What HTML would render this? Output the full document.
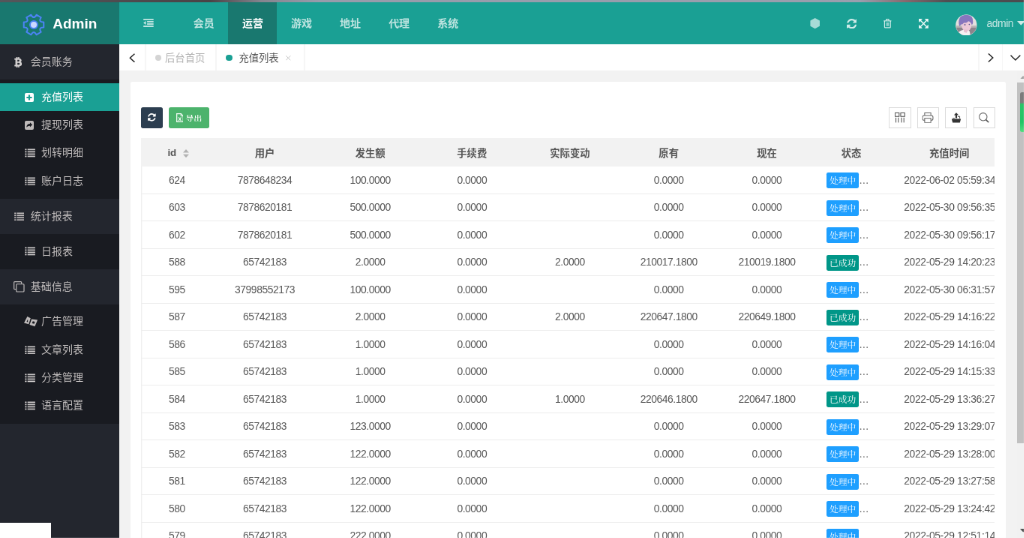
<!DOCTYPE html>
<html lang="zh-CN">
<head>
<meta charset="utf-8">
<title>Admin</title>
<style>
*{box-sizing:border-box;margin:0;padding:0}
html,body{width:1024px;height:538px;overflow:hidden;background:#f2f2f2}
body{position:relative;font-family:"Liberation Sans","Noto Sans CJK SC",sans-serif;font-size:14px;color:#666}
i{font-style:normal}
.abs{position:absolute}
#wrap{position:absolute;left:0;top:0;width:1365.333px;height:717.333px;overflow:hidden;will-change:transform;transform:scale(.75);transform-origin:0 0}
#stripe{position:absolute;left:0;top:0;width:1365.333px;height:3.067px;z-index:50;
 background:linear-gradient(90deg,#55575b 0%,#4a4346 20.5%,#85858f 25.5%,#979cab 31%,#9a9fae 84%,#86696d 88.5%,#4f4f52 92.5%,#4c4c4f 100%)}
#logo{position:absolute;left:0;top:0;width:159.333px;height:59.2px;background:#19786f;color:#fff}
#logo svg{position:absolute;left:28.667px;top:17.067px}
#logo b{position:absolute;left:70.133px;top:0;line-height:64.8px;font-size:19.067px;font-weight:bold;letter-spacing:0}
#header{position:absolute;left:159.333px;top:0;width:1206px;height:59.2px;background:#1aa094}
.nav{position:absolute;top:0;height:59.2px;width:65.067px;text-align:center;line-height:62.133px;font-size:14px;font-weight:bold;color:rgba(255,255,255,.72)}
.nav.on{background:#19786f;color:#fff}
.hic{position:absolute;top:0;height:59.2px;color:rgba(255,255,255,.7)}
#sidebar{position:absolute;left:0;top:59.2px;width:159.333px;height:658.667px;background:#23262e;color:#bfbbbb;overflow:hidden}
.grp{position:relative;height:46.8px;line-height:47.733px;font-size:14px}
.grp svg{position:absolute}
.grp span{position:absolute;left:40.8px;top:0}
.sub{background:#191b21;padding:4.8px 0 4.933px}
.itm{position:relative;height:37.333px;line-height:37.6px;font-size:14px}
.itm svg{position:absolute}
.itm span{position:absolute;left:54.933px;top:0}
.itm.on{background:#1aa094;color:#fff}
.itm .ic{left:32.533px;top:12.8px;color:#c9c6c6}
#tabs{position:absolute;left:159.333px;top:59.2px;width:1206px;height:34.533px;background:#fff}
.vl{position:absolute;top:0;width:1.333px;height:34.533px;background:#f6f6f6}
.tab{position:absolute;top:0;height:34.533px;line-height:38.4px;font-size:13.333px;color:#b4b4b4;white-space:nowrap}
.dot{position:absolute;top:13.6px;width:8.267px;height:8.267px;border-radius:50%;background:#d4d4d4}
#card{position:absolute;left:174.267px;top:108.533px;width:1166.267px;height:626.667px;background:#fff;border-radius:2.667px}
#sb{position:absolute;left:1356px;top:93.733px;width:17.333px;height:623.6px;background:#f1f1f1}
#sb .th{position:absolute;left:0;top:16px;width:17.333px;height:481.333px;background:#c1c1c1}
.tbtn{position:absolute;top:142.667px;height:28px;border-radius:2.667px}
.tool{position:absolute;top:142.933px;width:29.067px;height:27.6px;border:1.333px solid #dcdcdc;background:#fff}
.tool svg{position:absolute;left:50%;top:50%;transform:translate(-50%,-50%)}
#tw{position:absolute;left:188.4px;top:184.267px;width:1137.867px;height:533.333px;overflow:hidden}
table{border-collapse:collapse;table-layout:fixed;width:1160.8px;font-size:13.867px;letter-spacing:-0.44px;color:#585858}
th{height:37.733px;background:#f2f2f2;font-weight:bold;color:#555;text-align:center;font-size:13.333px;letter-spacing:0;padding:0;white-space:nowrap}
td{height:36.507px;text-align:center;border-bottom:1.333px solid #eeeeee;padding:0 0 0.8px;white-space:nowrap;overflow:hidden}
tbody tr{height:36.507px}
td.st{text-align:left}
td:first-child{box-shadow:inset 1.333px 0 0 #f0f0f0}
.stc{padding-left:13.867px;white-space:nowrap;position:relative;top:1.067px;height:26.667px;line-height:26.667px;overflow:hidden}
.bd{display:inline-block;vertical-align:top;margin-top:2.533px;width:43.733px;height:21.333px;line-height:23.333px;border-radius:2.133px;color:#fff;text-align:center;font-size:11.733px;letter-spacing:0;font-family:"Liberation Serif","Noto Serif CJK SC",serif;overflow:hidden}
.bp{background:#1e9fff}
.bs{background:#009688}
.el{display:inline-block;margin-left:0;color:#666;font-size:12.8px;letter-spacing:0;vertical-align:top;position:relative;top:2.4px;line-height:28.533px;font-family:"Noto Sans CJK SC",sans-serif}
td.dt{text-align:left}
td.dt div{padding-left:23.067px;white-space:nowrap;letter-spacing:-0.36px}
#wbox{position:absolute;left:0;top:697.067px;width:68.4px;height:21.333px;background:#fff;z-index:20}
</style>
</head>
<body>
<div id="wrap">
<div id="logo">
<svg width="32" height="32" viewBox="-12 -12 24 24"><path fill="none" stroke="#4d84f5" stroke-width="1.5" stroke-linejoin="round" d="M9.95 -2.67 L9.95 2.67 Q4.24 2.45 7.28 7.28 L2.67 9.95 Q0.00 4.90 -2.67 9.95 L-7.28 7.28 Q-4.24 2.45 -9.95 2.67 L-9.95 -2.67 Q-4.24 -2.45 -7.28 -7.28 L-2.67 -9.95 Q-0.00 -4.90 2.67 -9.95 L7.28 -7.28 Q4.24 -2.45 9.95 -2.67 Z"/><circle r="4.5" fill="#4d84f5"/><circle r="3" fill="#ccd9ff"/></svg>
<b>Admin</b>
</div>
<div id="header">
 <svg class="abs" style="left:31.333px;top:25.2px" width="13.867" height="11.067" viewBox="0 0 11 9"><g fill="rgba(255,255,255,.78)"><rect x="0" y="0" width="11" height="1.4"/><rect x="4" y="2.5" width="7" height="1.4"/><rect x="4" y="5" width="7" height="1.4"/><rect x="0" y="7.5" width="11" height="1.4"/><path d="M0 4.45 L2.7 2.4 V6.5Z"/></g></svg>
 <div class="nav" style="left:80px">会员</div>
 <div class="nav on" style="left:145.067px">运营</div>
 <div class="nav" style="left:210.133px">游戏</div>
 <div class="nav" style="left:275.2px">地址</div>
 <div class="nav" style="left:340.267px">代理</div>
 <div class="nav" style="left:405.333px">系统</div>
 <!-- right icons -->
 <svg class="abs" style="left:920.933px;top:24.4px" width="13.333" height="14.133" viewBox="0 0 10 10.6"><path fill="rgba(255,255,255,.62)" d="M5 0 L9.7 2.6 V8 L5 10.6 L0.3 8 V2.6Z"/></svg>
 <svg class="abs" style="left:969.333px;top:24.8px" width="13.333" height="13.333" viewBox="0 0 1536 1536"><path fill="rgba(255,255,255,.8)" d="M1511 928q0 5-1 7-64 268-268 434.500T764 1536q-146 0-282.500-55T238 1324l-129 129q-19 19-45 19t-45-19-19-45V960q0-26 19-45t45-19h448q26 0 45 19t19 45-19 45l-137 137q71 66 161 102t187 36q134 0 250-65t186-179q11-17 53-117 8-23 30-23h192q13 0 22.500 9.500t9.500 22.500zm25-800v448q0 26-19 45t-45 19h-448q-26 0-45-19t-19-45 19-45l138-138Q969 256 768 256q-134 0-250 65T332 500q-11 17-53 117-8 23-30 23H50q-13 0-22.500-9.500T18 608v-7q65-268 270-434.500T768 0q146 0 284 55.500T1297 212l130-129q19-19 45-19t45 19 19 45z"/></svg>
 <svg class="abs" style="left:1018.667px;top:25.067px" width="10.667" height="12.533" viewBox="0 0 9 10.6"><g fill="none" stroke="rgba(255,255,255,.8)" stroke-width="1"><path d="M1.2 2.6 V9.3 Q1.2 10.1 2 10.1 H7 Q7.8 10.1 7.8 9.3 V2.6"/><path d="M0.2 2.4 H8.8"/><path d="M3 2.2 V0.9 Q3 0.5 3.4 0.5 H5.6 Q6 0.5 6 0.9 V2.2"/><path d="M3.3 4.2 V8.3 M4.5 4.2 V8.3 M5.7 4.2 V8.3" stroke-width="0.7"/></g></svg>
 <svg class="abs" style="left:1065.733px;top:24.933px" width="12.8" height="12.8" viewBox="0 0 10 10"><g fill="#e9f7f5"><path d="M0 0 H4 L0 4Z"/><path d="M10 0 V4 L6 0Z"/><path d="M0 10 V6 L4 10Z"/><path d="M10 10 H6 L10 6Z"/><path d="M1.6 0.8 L5 4.2 L8.4 0.8 L9.2 1.6 L5.8 5 L9.2 8.4 L8.4 9.2 L5 5.8 L1.6 9.2 L0.8 8.4 L4.2 5 L0.8 1.6Z"/></g></svg>
 <svg class="abs" style="left:1114.667px;top:18.533px" width="28.8" height="28.8" viewBox="0 0 22 22"><defs><clipPath id="av"><circle cx="11" cy="11" r="10.7"/></clipPath></defs><g clip-path="url(#av)"><rect width="22" height="22" fill="#e4e0de"/><rect x="0" y="13" width="22" height="9" fill="#8d848c"/><rect x="0" y="11.6" width="22" height="2" fill="#b9b2b4"/><path d="M2 22 Q3 16.5 7.5 16 L13 15.5 Q15.5 18 15 22Z" fill="#f4f1f2"/><ellipse cx="11.2" cy="11.8" rx="4.9" ry="5.4" fill="#ecc9d8"/><path d="M8.4 15.5 L12.6 15.8 L11.4 19 L8.6 18.2Z" fill="#e6c0d0"/><path d="M3.4 9.6 Q2.6 1.2 10.4 0.6 Q18.4 0.4 17.8 8.2 Q17.6 10.4 16.6 10.8 Q15.6 7.6 13 7 Q11.4 9.4 8.6 8.6 Q7.2 10.6 5.4 10.6 Q4.6 12.4 4.4 12.2 Q3.6 11.4 3.4 9.6Z" fill="#8676be"/><circle cx="9.6" cy="10.7" r="0.7" fill="#5a5590"/><circle cx="14" cy="10.4" r="0.6" fill="#5a5590"/></g><circle cx="11" cy="11" r="10.7" fill="none" stroke="rgba(255,255,255,.35)" stroke-width="0.5"/></svg>
 <div class="abs" style="left:1156.267px;top:0;line-height:62.133px;font-size:14px;letter-spacing:-0.56px;color:rgba(255,255,255,.75)">admin</div>
 <svg class="abs" style="left:1196.4px;top:27.733px" width="10.667" height="5.867" viewBox="0 0 8 4.4"><path fill="rgba(255,255,255,.78)" d="M0 0 H8 L4 4.4Z"/></svg>
</div>
<div id="stripe"></div>

<div id="sidebar">
 <div class="grp"><svg style="left:18.667px;top:17.067px" width="10.667" height="14.133" viewBox="-0.3 -0.2 7.4 10"><path fill="#d6d3d3" stroke="#d6d3d3" stroke-width="0.35" fill-rule="evenodd" d="M0 1.2 H1.6 V0 H2.6 V1.2 H3.3 V0 H4.3 V1.25 Q6.3 1.5 6.3 3.1 Q6.3 4.2 5.4 4.6 Q6.8 5 6.8 6.4 Q6.8 8.2 4.3 8.4 V9.6 H3.3 V8.4 H2.6 V9.6 H1.6 V8.4 H0 V7.4 H0.9 V2.2 H0Z M2.4 2.3 V4.2 H3.5 Q4.7 4.2 4.7 3.25 Q4.7 2.3 3.5 2.3Z M2.4 5.2 V7.3 H3.7 Q5.1 7.3 5.1 6.25 Q5.1 5.2 3.7 5.2Z"/></svg><span>会员账务</span></div>
 <div class="sub">
  <div class="itm on"><svg style="left:32.8px;top:12.8px" width="12" height="12" viewBox="0 0 9 9"><path fill="#fff" fill-rule="evenodd" d="M1.5 0 H7.5 Q9 0 9 1.5 V7.5 Q9 9 7.5 9 H1.5 Q0 9 0 7.5 V1.5 Q0 0 1.5 0Z M3.7 1.8 V3.7 H1.8 V5.3 H3.7 V7.2 H5.3 V5.3 H7.2 V3.7 H5.3 V1.8Z"/></svg><span>充值列表</span></div>
  <div class="itm"><svg style="left:32.8px;top:12.8px" width="12" height="12" viewBox="0 0 9 9"><path fill="currentColor" fill-rule="evenodd" d="M1.5 0 H7.5 Q9 0 9 1.5 V7.5 Q9 9 7.5 9 H1.5 Q0 9 0 7.5 V1.5 Q0 0 1.5 0Z M5.2 1.7 V3 Q1.9 3 1.7 6.6 Q2.8 5 5.2 5 V6.3 L7.6 4Z"/></svg><span>提现列表</span></div>
  <div class="itm"><svg class="ic" viewBox="0 0 14 12" width="14.133" height="11.733"><g fill="currentColor"><rect x="0" y="0.5" width="2.3" height="1.8"/><rect x="3.5" y="0.5" width="10.5" height="1.8"/><rect x="0" y="3.6" width="2.3" height="1.8"/><rect x="3.5" y="3.6" width="10.5" height="1.8"/><rect x="0" y="6.7" width="2.3" height="1.8"/><rect x="3.5" y="6.7" width="10.5" height="1.8"/><rect x="0" y="9.8" width="2.3" height="1.8"/><rect x="3.5" y="9.8" width="10.5" height="1.8"/></g></svg><span>划转明细</span></div>
  <div class="itm"><svg class="ic" viewBox="0 0 14 12" width="14.133" height="11.733"><g fill="currentColor"><rect x="0" y="0.5" width="2.3" height="1.8"/><rect x="3.5" y="0.5" width="10.5" height="1.8"/><rect x="0" y="3.6" width="2.3" height="1.8"/><rect x="3.5" y="3.6" width="10.5" height="1.8"/><rect x="0" y="6.7" width="2.3" height="1.8"/><rect x="3.5" y="6.7" width="10.5" height="1.8"/><rect x="0" y="9.8" width="2.3" height="1.8"/><rect x="3.5" y="9.8" width="10.5" height="1.8"/></g></svg><span>账户日志</span></div>
 </div>
 <div class="grp"><svg style="left:18.667px;top:17.733px" viewBox="0 0 14 12" width="13.6" height="11.467"><g fill="currentColor"><rect x="0" y="0.5" width="2.3" height="1.8"/><rect x="3.5" y="0.5" width="10.5" height="1.8"/><rect x="0" y="3.6" width="2.3" height="1.8"/><rect x="3.5" y="3.6" width="10.5" height="1.8"/><rect x="0" y="6.7" width="2.3" height="1.8"/><rect x="3.5" y="6.7" width="10.5" height="1.8"/><rect x="0" y="9.8" width="2.3" height="1.8"/><rect x="3.5" y="9.8" width="10.5" height="1.8"/></g></svg><span>统计报表</span></div>
 <div class="sub">
  <div class="itm"><svg class="ic" viewBox="0 0 14 12" width="14.133" height="11.733"><g fill="currentColor"><rect x="0" y="0.5" width="2.3" height="1.8"/><rect x="3.5" y="0.5" width="10.5" height="1.8"/><rect x="0" y="3.6" width="2.3" height="1.8"/><rect x="3.5" y="3.6" width="10.5" height="1.8"/><rect x="0" y="6.7" width="2.3" height="1.8"/><rect x="3.5" y="6.7" width="10.5" height="1.8"/><rect x="0" y="9.8" width="2.3" height="1.8"/><rect x="3.5" y="9.8" width="10.5" height="1.8"/></g></svg><span>日报表</span></div>
 </div>
 <div class="grp"><svg style="left:18.133px;top:16.4px" width="14.667" height="14.667" viewBox="0 0 11 11"><g fill="none" stroke="currentColor" stroke-width="0.9"><path d="M2.6 2.6 V1.2 Q2.6 0.5 3.3 0.5 H7.6 Q8.3 0.5 8.3 1.2 V1.2" opacity="0"/><path d="M2.4 8 H1.2 Q0.5 8 0.5 7.3 V1.2 Q0.5 0.5 1.2 0.5 H7.3 Q8 0.5 8 1.2 V2.4"/><rect x="2.8" y="2.8" width="7.7" height="7.7" rx="0.7"/></g></svg><span>基础信息</span></div>
 <div class="sub">
  <div class="itm"><svg style="left:32.267px;top:12px" width="18.133" height="13.333" viewBox="0 0 13.6 10"><g fill="currentColor" fill-rule="evenodd"><path d="M3.3 0 L6.6 1.6 L4.7 7.6 L0 6.4Z M3.9 2.6 L2.6 5.2 L3.9 5.6Z"/><path d="M7.6 2.6 L13.6 3.4 L10.8 10 L5.6 8.2Z M8.8 4.6 L8 6.8 L10.2 7.4 L11 5.2Z"/></g></svg><span>广告管理</span></div>
  <div class="itm"><svg class="ic" viewBox="0 0 14 12" width="14.133" height="11.733"><g fill="currentColor"><rect x="0" y="0.5" width="2.3" height="1.8"/><rect x="3.5" y="0.5" width="10.5" height="1.8"/><rect x="0" y="3.6" width="2.3" height="1.8"/><rect x="3.5" y="3.6" width="10.5" height="1.8"/><rect x="0" y="6.7" width="2.3" height="1.8"/><rect x="3.5" y="6.7" width="10.5" height="1.8"/><rect x="0" y="9.8" width="2.3" height="1.8"/><rect x="3.5" y="9.8" width="10.5" height="1.8"/></g></svg><span>文章列表</span></div>
  <div class="itm"><svg class="ic" viewBox="0 0 14 12" width="14.133" height="11.733"><g fill="currentColor"><rect x="0" y="0.5" width="2.3" height="1.8"/><rect x="3.5" y="0.5" width="10.5" height="1.8"/><rect x="0" y="3.6" width="2.3" height="1.8"/><rect x="3.5" y="3.6" width="10.5" height="1.8"/><rect x="0" y="6.7" width="2.3" height="1.8"/><rect x="3.5" y="6.7" width="10.5" height="1.8"/><rect x="0" y="9.8" width="2.3" height="1.8"/><rect x="3.5" y="9.8" width="10.5" height="1.8"/></g></svg><span>分类管理</span></div>
  <div class="itm"><svg class="ic" viewBox="0 0 14 12" width="14.133" height="11.733"><g fill="currentColor"><rect x="0" y="0.5" width="2.3" height="1.8"/><rect x="3.5" y="0.5" width="10.5" height="1.8"/><rect x="0" y="3.6" width="2.3" height="1.8"/><rect x="3.5" y="3.6" width="10.5" height="1.8"/><rect x="0" y="6.7" width="2.3" height="1.8"/><rect x="3.5" y="6.7" width="10.5" height="1.8"/><rect x="0" y="9.8" width="2.3" height="1.8"/><rect x="3.5" y="9.8" width="10.5" height="1.8"/></g></svg><span>语言配置</span></div>
 </div>
</div>
<div id="wbox"></div>

<div id="tabs">
 <svg class="abs" style="left:13.067px;top:11.467px" width="8.533" height="12.533" viewBox="0 0 6.4 9.4"><path fill="none" stroke="#222" stroke-width="1.1" d="M5.6 0.5 L1 4.7 L5.6 8.9"/></svg>
 <i class="vl" style="left:34.133px"></i>
 <i class="dot" style="left:47.2px"></i>
 <div class="tab" style="left:60.667px">后台首页</div>
 <i class="vl" style="left:128px"></i>
 <i class="dot" style="left:142.133px;background:#1aa094"></i>
 <div class="tab" style="left:159.067px;color:#555">充值列表</div>
 <svg class="abs" style="left:221.867px;top:15.067px" width="6.667" height="6.667" viewBox="0 0 5 5"><path stroke="#c2c2c2" stroke-width="0.7" d="M0.3 0.3 L4.7 4.7 M4.7 0.3 L0.3 4.7"/></svg>
 <i class="vl" style="left:246.133px"></i>
 <i class="vl" style="left:1145.067px"></i>
 <i class="vl" style="left:1176.8px"></i>
 <svg class="abs" style="left:1157.867px;top:11.733px" width="8" height="12" viewBox="0 0 6 9"><path fill="none" stroke="#222" stroke-width="1.1" d="M0.7 0.4 L5.1 4.5 L0.7 8.6"/></svg>
 <svg class="abs" style="left:1187.467px;top:13.6px" width="13.867" height="8" viewBox="0 0 10.4 6"><path fill="none" stroke="#222" stroke-width="1.1" d="M0.4 0.6 L5.2 5.2 L10 0.6"/></svg>
</div>

<div id="card"></div>
<div class="tbtn" style="left:188px;width:28.533px;background:#2c3e50">
 <svg class="abs" style="left:9.067px;top:8.8px" width="10.667" height="10.667" viewBox="0 0 1536 1536"><path fill="#fff" d="M1511 928q0 5-1 7-64 268-268 434.500T764 1536q-146 0-282.500-55T238 1324l-129 129q-19 19-45 19t-45-19-19-45V960q0-26 19-45t45-19h448q26 0 45 19t19 45-19 45l-137 137q71 66 161 102t187 36q134 0 250-65t186-179q11-17 53-117 8-23 30-23h192q13 0 22.500 9.500t9.500 22.500zm25-800v448q0 26-19 45t-45 19h-448q-26 0-45-19t-19-45 19-45l138-138Q969 256 768 256q-134 0-250 65T332 500q-11 17-53 117-8 23-30 23H50q-13 0-22.500-9.500T18 608v-7q65-268 270-434.500T768 0q146 0 284 55.500T1297 212l130-129q19-19 45-19t45 19 19 45z"/></svg>
</div>
<div class="tbtn" style="left:225.2px;width:53.867px;background:#4cb36c;color:#fff">
 <svg class="abs" style="left:9.333px;top:8px" width="9.867" height="12" viewBox="0 0 7.4 9"><g fill="none" stroke="#f4fbf6" stroke-width="0.95"><path d="M0.5 0.5 H4.8 L6.9 2.6 V8.5 H0.5Z"/><path d="M4.6 0.5 V2.8 H6.9" stroke-width="0.7"/><path d="M2.3 4 L4.9 7.6 M4.9 4 L2.3 7.6" stroke-width="0.85"/></g></svg>
 <span class="abs" style="left:22.133px;top:0;line-height:28.533px;font-size:11.067px;transform:scaleY(.87);font-weight:600;font-family:'Liberation Serif','Noto Serif CJK SC',serif;color:#fff">导出</span>
</div>

<div class="tool" style="left:1185.467px"><svg width="14.667" height="14.667" viewBox="0 0 11 11"><g fill="none" stroke="#555" stroke-width="0.8"><rect x="0.6" y="0.6" width="4" height="3.6"/><rect x="6.2" y="0.6" width="4" height="3.6"/><path d="M1.4 5.4 V10.4 M3.8 5.4 V10.4 M7 5.4 V10.4 M9.4 5.4 V10.4"/></g></svg></div>
<div class="tool" style="left:1222.8px"><svg width="15.2" height="14.667" viewBox="0 0 11.4 11"><g fill="none" stroke="#666" stroke-width="0.8"><path d="M2.6 3.2 V0.6 H8.8 V3.2"/><rect x="0.5" y="3.2" width="10.4" height="4.8" rx="1.6"/><rect x="2.6" y="6" width="6.2" height="4.4" fill="#fff"/></g></svg></div>
<div class="tool" style="left:1260.133px"><svg width="13.333" height="13.867" viewBox="0 0 10 10.4"><g fill="#333"><path d="M0.4 6.4 H9.6 L8.6 10 H1.4Z"/><path d="M5 0.2 L7.4 2.6 H5.8 V5.6 H4.2 V2.6 H2.6Z"/><path d="M6.6 3.6 H8.8 V6 H8 V4.4 H6.6Z M1.6 5.2 H3.4 V6 H1.6Z" fill="#666"/></g></svg></div>
<div class="tool" style="left:1297.6px"><svg width="14.667" height="14.667" viewBox="0 0 11 11"><g fill="none" stroke="#666" stroke-width="0.8"><circle cx="4.6" cy="4.6" r="3.9"/><path d="M7.4 7.4 L10.2 10.2" stroke-width="1.3" stroke="#555"/></g></svg></div>

<div id="tw">
<table>
<colgroup><col style="width:95.2px"><col style="width:138.933px"><col style="width:142.4px"><col style="width:128.8px"><col style="width:132.533px"><col style="width:130.933px"><col style="width:130.667px"><col style="width:94.4px"><col style="width:166.933px"></colgroup>
<thead><tr><th><span style="position:relative;left:-6.667px">id<svg style="position:absolute;left:21.067px;top:3.333px" width="8" height="11.2" viewBox="0 0 6 8.4"><path fill="#b2b2b2" d="M3 0 L6 3.4 H0Z M0 5 H6 L3 8.4Z"/></svg></span></th><th>用户</th><th>发生额</th><th>手续费</th><th>实际变动</th><th>原有</th><th>现在</th><th>状态</th><th>充值时间</th></tr></thead>
<tbody>
<tr><td>624</td><td>7878648234</td><td>100.0000</td><td>0.0000</td><td></td><td>0.0000</td><td>0.0000</td><td class="st"><div class="stc"><span class="bd bp">处理中</span><i class="el">…</i></div></td><td class="dt"><div>2022-06-02 05:59:34</div></td></tr>
<tr><td>603</td><td>7878620181</td><td>500.0000</td><td>0.0000</td><td></td><td>0.0000</td><td>0.0000</td><td class="st"><div class="stc"><span class="bd bp">处理中</span><i class="el">…</i></div></td><td class="dt"><div>2022-05-30 09:56:35</div></td></tr>
<tr><td>602</td><td>7878620181</td><td>500.0000</td><td>0.0000</td><td></td><td>0.0000</td><td>0.0000</td><td class="st"><div class="stc"><span class="bd bp">处理中</span><i class="el">…</i></div></td><td class="dt"><div>2022-05-30 09:56:17</div></td></tr>
<tr><td>588</td><td>65742183</td><td>2.0000</td><td>0.0000</td><td>2.0000</td><td>210017.1800</td><td>210019.1800</td><td class="st"><div class="stc"><span class="bd bs">已成功</span><i class="el">…</i></div></td><td class="dt"><div>2022-05-29 14:20:23</div></td></tr>
<tr><td>595</td><td>37998552173</td><td>100.0000</td><td>0.0000</td><td></td><td>0.0000</td><td>0.0000</td><td class="st"><div class="stc"><span class="bd bp">处理中</span><i class="el">…</i></div></td><td class="dt"><div>2022-05-30 06:31:57</div></td></tr>
<tr><td>587</td><td>65742183</td><td>2.0000</td><td>0.0000</td><td>2.0000</td><td>220647.1800</td><td>220649.1800</td><td class="st"><div class="stc"><span class="bd bs">已成功</span><i class="el">…</i></div></td><td class="dt"><div>2022-05-29 14:16:22</div></td></tr>
<tr><td>586</td><td>65742183</td><td>1.0000</td><td>0.0000</td><td></td><td>0.0000</td><td>0.0000</td><td class="st"><div class="stc"><span class="bd bp">处理中</span><i class="el">…</i></div></td><td class="dt"><div>2022-05-29 14:16:04</div></td></tr>
<tr><td>585</td><td>65742183</td><td>1.0000</td><td>0.0000</td><td></td><td>0.0000</td><td>0.0000</td><td class="st"><div class="stc"><span class="bd bp">处理中</span><i class="el">…</i></div></td><td class="dt"><div>2022-05-29 14:15:33</div></td></tr>
<tr><td>584</td><td>65742183</td><td>1.0000</td><td>0.0000</td><td>1.0000</td><td>220646.1800</td><td>220647.1800</td><td class="st"><div class="stc"><span class="bd bs">已成功</span><i class="el">…</i></div></td><td class="dt"><div>2022-05-29 13:36:27</div></td></tr>
<tr><td>583</td><td>65742183</td><td>123.0000</td><td>0.0000</td><td></td><td>0.0000</td><td>0.0000</td><td class="st"><div class="stc"><span class="bd bp">处理中</span><i class="el">…</i></div></td><td class="dt"><div>2022-05-29 13:29:07</div></td></tr>
<tr><td>582</td><td>65742183</td><td>122.0000</td><td>0.0000</td><td></td><td>0.0000</td><td>0.0000</td><td class="st"><div class="stc"><span class="bd bp">处理中</span><i class="el">…</i></div></td><td class="dt"><div>2022-05-29 13:28:00</div></td></tr>
<tr><td>581</td><td>65742183</td><td>122.0000</td><td>0.0000</td><td></td><td>0.0000</td><td>0.0000</td><td class="st"><div class="stc"><span class="bd bp">处理中</span><i class="el">…</i></div></td><td class="dt"><div>2022-05-29 13:27:58</div></td></tr>
<tr><td>580</td><td>65742183</td><td>122.0000</td><td>0.0000</td><td></td><td>0.0000</td><td>0.0000</td><td class="st"><div class="stc"><span class="bd bp">处理中</span><i class="el">…</i></div></td><td class="dt"><div>2022-05-29 13:24:42</div></td></tr>
<tr><td>579</td><td>65742183</td><td>222.0000</td><td>0.0000</td><td></td><td>0.0000</td><td>0.0000</td><td class="st"><div class="stc"><span class="bd bp">处理中</span><i class="el">…</i></div></td><td class="dt"><div>2022-05-29 12:51:14</div></td></tr>
</tbody>
</table>
</div>

<div id="sb"><div class="th"></div>
 <svg class="abs" style="left:4.267px;top:7.2px" width="8.533" height="4.533" viewBox="0 0 6.4 3.4"><path fill="#a3a3a3" d="M3.2 0 L6.4 3.4 H0Z"/></svg>
 <svg class="abs" style="left:4.267px;top:611.467px" width="8.533" height="4.533" viewBox="0 0 6.4 3.4"><path fill="#505050" d="M0 0 H6.4 L3.2 3.4Z"/></svg>
 <div class="abs" style="left:4px;top:28.933px;width:16px;height:53.333px;border-radius:2.667px;background:linear-gradient(180deg,#7c7c7c 0,#7c7c7c 26%,#2cc468 30%,#22c466 75%,#52de80 100%)"></div>
</div>
</div>
</body>
</html>
